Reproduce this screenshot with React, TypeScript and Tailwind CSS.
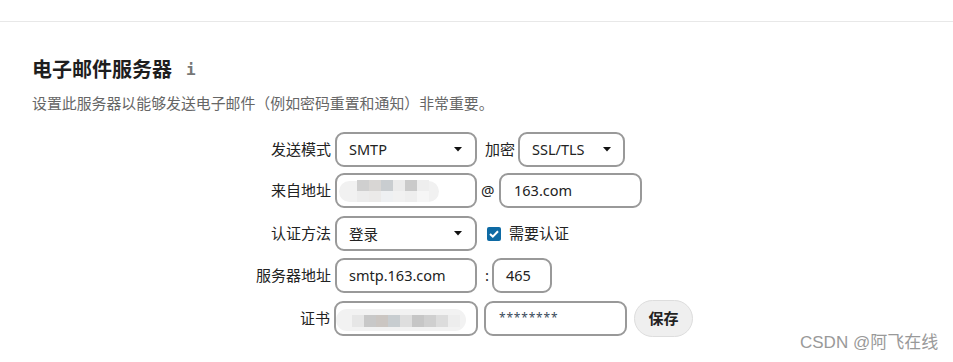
import React from "react";

const Caret = () => (
  <svg width="8" height="5" viewBox="0 0 8 5" className="shrink-0">
    <path d="M0 0 L8 0 L4 4.5 Z" fill="#111" />
  </svg>
);

const boxCls =
  "shrink-0 h-[35px] rounded-[9px] border-2 border-[#999999] bg-white flex items-center text-[14.5px] text-[#222]";

const cjk = { fontFamily: '"Noto Sans CJK SC", sans-serif' };

export default function App() {
  return (
    <div
      className="w-[953px] h-[362px] bg-white relative overflow-hidden"
      style={{ fontFamily: '"Noto Sans", "Noto Sans CJK SC", sans-serif' }}
    >
      <div className="h-[22px] border-b border-[#e8e8e8]" />
      <div className="pl-[32px]">
        <div className="mt-[33px] h-[28px] flex items-center">
          <span className="text-[20px] font-bold text-[#1e1e1e] leading-[28px]" style={cjk}>
            电子邮件服务器
          </span>
          <span
            className="ml-[14px] text-[16px] font-bold text-[#777] leading-none mt-[1px]"
            style={{ fontFamily: '"DejaVu Sans Mono", monospace' }}
          >
            i
          </span>
        </div>
        <div className="mt-[10px] h-[20px] leading-[20px] text-[14.9px] text-[#666] whitespace-nowrap" style={cjk}>
          设置此服务器以能够发送电子邮件（例如密码重置和通知）非常重要。
        </div>

        <div className="mt-[19px] flex flex-col text-[15px] text-[#222]">
          {/* Row 1 */}
          <div className="flex items-center h-[35px]">
            <div className="shrink-0 w-[303px] pr-[4px] text-right whitespace-nowrap" style={cjk}>
              发送模式
            </div>
            <div className={`${boxCls} w-[142px] pl-[12px] pr-[13px] justify-between`}>
              <span>SMTP</span>
              <Caret />
            </div>
            <div className="shrink-0 ml-[8px] whitespace-nowrap" style={cjk}>
              加密
            </div>
            <div className={`${boxCls} ml-[3px] w-[107px] pl-[12px] pr-[12px] justify-between`}>
              <span>SSL/TLS</span>
              <Caret />
            </div>
          </div>

          {/* Row 2 */}
          <div className="flex items-center h-[35px] mt-[6px]">
            <div className="shrink-0 w-[303px] pr-[4px] text-right whitespace-nowrap" style={cjk}>
              来自地址
            </div>
            <div className={`${boxCls} w-[142px] relative overflow-hidden`}>
              <div className="absolute left-[2px] top-[6px] w-[100px] h-[21px] rounded-full bg-[#f1f1f1]" />
              <div className="absolute left-[20px] top-[5px] flex flex-col">
                <div className="flex">
                  <div className="w-[12px] h-[11px] bg-[#cfcfcf]" />
                  <div className="w-[12px] h-[11px] bg-[#d8d6d4]" />
                  <div className="w-[12px] h-[11px] bg-[#c9cdd0]" />
                  <div className="w-[12px] h-[11px] bg-[#ebebeb]" />
                  <div className="w-[12px] h-[11px] bg-[#cacaca]" />
                  <div className="w-[12px] h-[11px] bg-[#eeeeee]" />
                </div>
                <div className="flex">
                  <div className="w-[12px] h-[11px] bg-[#ececec]" />
                  <div className="w-[12px] h-[11px] bg-[#ebeae9]" />
                  <div className="w-[12px] h-[11px] bg-[#eef0f2]" />
                  <div className="w-[12px] h-[11px] bg-[#f1f1f1]" />
                  <div className="w-[12px] h-[11px] bg-[#eeeeee]" />
                  <div className="w-[12px] h-[11px] bg-[#f6f6f6]" />
                </div>
              </div>
            </div>
            <div className="shrink-0 ml-[4px] w-[14px]">@</div>
            <div className={`${boxCls} ml-[4px] w-[143px] pl-[13px]`}>163.com</div>
          </div>

          {/* Row 3 */}
          <div className="flex items-center h-[35px] mt-[8px]">
            <div className="shrink-0 w-[303px] pr-[4px] text-right whitespace-nowrap" style={cjk}>
              认证方法
            </div>
            <div className={`${boxCls} w-[142px] pl-[12px] pr-[13px] justify-between`} style={cjk}>
              <span>登录</span>
              <Caret />
            </div>
            <div className="shrink-0 ml-[10px] w-[14px] h-[14px] bg-[#0e6aa4] rounded-[2px] flex items-center justify-center">
              <svg width="10" height="8" viewBox="0 0 10 8">
                <path d="M1 4 L3.8 6.6 L9 1.2" stroke="white" strokeWidth="2" fill="none" />
              </svg>
            </div>
            <div className="shrink-0 ml-[8px] whitespace-nowrap" style={cjk}>
              需要认证
            </div>
          </div>

          {/* Row 4 */}
          <div className="flex items-center h-[35px] mt-[7px]">
            <div className="shrink-0 w-[303px] pr-[4px] text-right whitespace-nowrap" style={cjk}>
              服务器地址
            </div>
            <div className={`${boxCls} w-[142px] pl-[12px]`}>smtp.163.com</div>
            <div className="shrink-0 ml-[8px] w-[7px]">:</div>
            <div className={`${boxCls} w-[60px] pl-[12px]`}>465</div>
          </div>

          {/* Row 5 */}
          <div className="flex items-center h-[35px] mt-[8px]">
            <div className="shrink-0 w-[302px] pr-[4px] text-right whitespace-nowrap" style={cjk}>
              证书
            </div>
            <div className={`${boxCls} w-[144px] relative overflow-hidden`}>
              <div className="absolute left-0 top-[6px] w-[130px] h-[22px] rounded-full bg-[#f2f2f2]" />
              <div className="absolute left-[16px] top-[12px] flex">
                <div className="w-[12px] h-[12px] bg-[#e6e6e6]" />
                <div className="w-[12px] h-[12px] bg-[#c8c8c8]" />
                <div className="w-[12px] h-[12px] bg-[#cbc6c2]" />
                <div className="w-[12px] h-[12px] bg-[#c8cdd0]" />
                <div className="w-[12px] h-[12px] bg-[#dedede]" />
                <div className="w-[12px] h-[12px] bg-[#c6c6c6]" />
                <div className="w-[12px] h-[12px] bg-[#cfcfcf]" />
                <div className="w-[12px] h-[12px] bg-[#dcdcdc]" />
                <div className="w-[12px] h-[12px] bg-[#ededed]" />
              </div>
            </div>
            <div className={`${boxCls} ml-[6px] w-[143px] pl-[13px] items-start`}>
              <span className="text-[12px] tracking-[0.8px] text-[#3a4a5a] mt-[6px]">********</span>
            </div>
            <div
              className="shrink-0 ml-[7px] w-[59px] h-[37px] rounded-[19px] bg-[#efefef] border border-[#dddddd] flex items-center justify-center font-bold text-[15px] text-[#222]"
              style={cjk}
            >
              保存
            </div>
          </div>
        </div>
      </div>

      <div
        className="absolute left-[800px] top-[333px] text-[17px] text-[#999] leading-[20px] whitespace-nowrap"
        style={{ fontFamily: '"Liberation Sans", "Noto Sans CJK SC", sans-serif' }}
      >
        CSDN @阿飞在线
      </div>
    </div>
  );
}
